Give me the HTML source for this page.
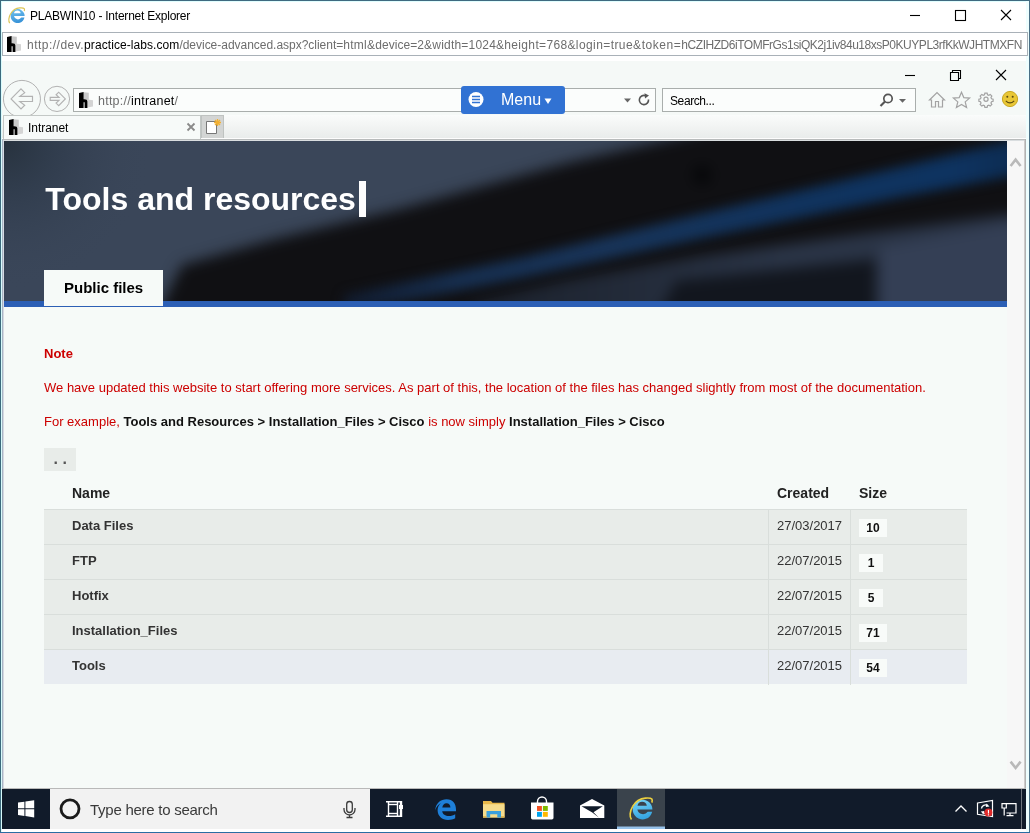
<!DOCTYPE html>
<html lang="en">
<head>
<meta charset="utf-8">
<title>PLABWIN10 - Internet Explorer</title>
<style>
*{box-sizing:border-box;margin:0;padding:0}
html,body{width:1030px;height:833px;overflow:hidden;background:#fff}
body{position:relative;will-change:transform;font-family:"Liberation Sans",sans-serif;color:#000}
.abs{position:absolute}
.t{position:absolute;white-space:nowrap;line-height:1}
#win{left:0;top:0;width:1030px;height:833px;background:#fff}
/* outer url bar */
#url{left:2px;top:32px;width:1026px;height:24px;border:1px solid #a9b1b8;background:#fff}
/* inner ie */
#ie{left:2px;top:61px;width:1024px;height:727px;background:#f5f9f7}
#addr{left:73px;top:88px;width:583px;height:24px;border:1px solid #a9aeac;background:#fbfdfc}
#search{left:662px;top:88px;width:254px;height:24px;border:1px solid #a9aeac;background:#fbfdfc}
#menu{left:461px;top:86px;width:104px;height:27.5px;background:#3172d3;border-radius:3px}
#tabrow{left:2px;top:115px;width:1024px;height:24px;background:linear-gradient(#fafcfb 0,#f3f5f4 10px,#e9eceb 23px,#fdfdfd 23px)}
#tab{left:3px;top:115px;width:198px;height:24px;background:#f7faf9;border:1px solid #c3c8c6;border-bottom:none}
#newtab{left:201px;top:115px;width:23px;height:23px;background:#d3d5d4;border:1px solid #bfc3c1;border-bottom:none}
/* page */
#page{left:4px;top:140px;width:1003px;height:648px;background:#f6faf8;overflow:hidden;border-top:0 solid #d5dadd}
#banner{left:0;top:1px;width:1003px;height:160px;background:#2f3a4d;overflow:hidden}
#blue{left:0;top:161px;width:1003px;height:5.5px;background:#2c5fb5}
#ptab{left:40px;top:130px;width:119px;height:36px;background:#f6faf8}
#sb{left:1007px;top:141px;width:17px;height:647px;background:#f7f7f7}
.red{color:#cc0000}
.b{font-weight:bold}
.row{position:absolute;left:40px;width:923px;height:35px;background:#e8ece9;border-top:1px solid #d9dedb}
.row .c1{position:absolute;left:724px;top:0;width:1px;height:35px;background:#d9dedb}
.row .c2{position:absolute;left:806px;top:0;width:1px;height:35px;background:#d9dedb}
.row .n{position:absolute;left:28px;top:8px;font-size:13px;font-weight:bold;color:#333;line-height:16px;white-space:nowrap}
.row .d{position:absolute;left:733px;top:8px;font-size:13px;color:#333;line-height:16px;white-space:nowrap}
.row .s{position:absolute;left:815px;top:9px;height:18px;width:28px;background:#f8fbf9;font-size:12px;font-weight:bold;color:#111;line-height:18px;text-align:center}
.row .s1{width:24px}
/* taskbar */
#task{left:2px;top:789px;width:1024px;height:40px;background:#111b2a}
#tsearch{left:50px;top:789px;width:320px;height:40px;background:#f2f2f2}
</style>
</head>
<body>
<div id="win" class="abs"></div>
<div class="abs" style="left:0;top:0;width:1030px;height:1px;background:#3f6a80"></div>
<div class="abs" style="left:0;top:1px;width:1030px;height:1px;background:#e0fefe"></div>
<div class="abs" style="left:0;top:0;width:1px;height:833px;background:#3b6a7d"></div>
<div class="abs" style="left:1px;top:1px;width:1px;height:831px;background:#d8fbfc"></div>
<div class="abs" style="left:1029px;top:0;width:1px;height:833px;background:#4a6f85"></div>
<div class="abs" style="left:1026px;top:1px;width:3px;height:831px;background:#eefefe"></div>
<div class="abs" style="left:0;top:832px;width:1030px;height:1px;background:#2a6da3"></div>

<!-- outer title bar -->
<div class="t" style="left:30px;top:10px;font-size:12px;letter-spacing:-0.23px;color:#000">PLABWIN10 - Internet Explorer</div>
<div id="url" class="abs"></div>
<div class="t" style="left:27px;top:39px;font-size:12px;color:#6d6d6d"><span style="letter-spacing:0.48px">http://dev.</span><span style="letter-spacing:0.075px;color:#000">practice-labs.com</span><span style="letter-spacing:-0.022px">/device-advanced.aspx?client=</span><span style="letter-spacing:0.3px">html</span><span style="letter-spacing:0.07px">&amp;device=2</span><span style="letter-spacing:0.2px">&amp;width=1024</span><span style="letter-spacing:0.33px">&amp;height=768</span><span style="letter-spacing:0.42px">&amp;login=true</span><span style="letter-spacing:0.56px">&amp;token=</span><span style="letter-spacing:-0.466px">hCZIHZD6iTOMFrGs1siQK2j1iv84u18xsP0KUYPL3rfKkWJHTMXFN</span></div>

<!-- inner IE -->
<div id="ie" class="abs"></div>
<div id="addr" class="abs"></div>
<div class="t" style="left:98px;top:94.5px;font-size:12.5px;letter-spacing:0.24px;color:#6d6d6d">http://<span style="color:#000">intranet</span>/</div>
<div id="search" class="abs"></div>
<div class="t" style="left:670px;top:94.5px;font-size:12px;letter-spacing:-0.4px;color:#000">Search...</div>
<div id="menu" class="abs"></div>
<div class="t" style="left:501px;top:91.7px;font-size:16px;color:#fff">Menu</div>
<div id="tabrow" class="abs"></div>
<div id="tab" class="abs"></div>
<div id="newtab" class="abs"></div>
<div class="t" style="left:28px;top:122px;font-size:12px;letter-spacing:-0.04px;color:#000">Intranet</div>

<svg class="abs" style="left:8.2px;top:5.2px" width="18.7" height="18.7" viewBox="0 0 32 32"><defs><linearGradient id="ieg1" x1="0" y1="0" x2="0.3" y2="1"><stop offset="0" stop-color="#72c2f0"/><stop offset="1" stop-color="#3a94d8"/></linearGradient></defs><path d="M28.5,19 H10.2 a7,7 0 0 0 12.6,2.6 h5.4 a12,12 0 1 1 0.3,-2.6 Z M10.3,14.2 h11.4 a5.8,5.8 0 0 0 -11.4,0 Z" fill="url(#ieg1)" fill-rule="evenodd"/><path d="M3,31 C0.5,28 0.8,21 4.5,15 C8,9 14,5.5 20,5 C24,4.7 26.8,5 27.8,6.2 C28.5,7.2 28.3,9 27.8,10.5" fill="none" stroke="#dcc555" stroke-width="2"/></svg>
<svg class="abs" style="left:7px;top:36px" width="14" height="16" viewBox="0 0 14 16"><polygon points="4.5,0.2 9.8,0.8 9.8,8 4.5,8" fill="#c9c9c9"/><polygon points="8.3,7.6 14,8.2 14,14.6 8.3,15.4" fill="#d4d4d4"/><path d="M0,0.9 L4.6,0 L4.6,7.2 Q8.4,7 8.4,9.5 L8.4,16 L5.6,16 L5.6,10.2 L4.6,10.2 L4.6,16 L0,16 Z" fill="#000"/></svg>
<svg class="abs" style="left:79px;top:92px" width="14" height="16" viewBox="0 0 14 16"><polygon points="4.5,0.2 9.8,0.8 9.8,8 4.5,8" fill="#c9c9c9"/><polygon points="8.3,7.6 14,8.2 14,14.6 8.3,15.4" fill="#d4d4d4"/><path d="M0,0.9 L4.6,0 L4.6,7.2 Q8.4,7 8.4,9.5 L8.4,16 L5.6,16 L5.6,10.2 L4.6,10.2 L4.6,16 L0,16 Z" fill="#000"/></svg>
<svg class="abs" style="left:9px;top:119px" width="14" height="16" viewBox="0 0 14 16"><polygon points="4.5,0.2 9.8,0.8 9.8,8 4.5,8" fill="#c9c9c9"/><polygon points="8.3,7.6 14,8.2 14,14.6 8.3,15.4" fill="#d4d4d4"/><path d="M0,0.9 L4.6,0 L4.6,7.2 Q8.4,7 8.4,9.5 L8.4,16 L5.6,16 L5.6,10.2 L4.6,10.2 L4.6,16 L0,16 Z" fill="#000"/></svg>
<svg class="abs" style="left:900px;top:1px" width="128" height="30" viewBox="0 0 128 30" fill="none" stroke="#000" stroke-width="1.1"><path d="M10,14.5 H20"/><rect x="55.5" y="9.5" width="10" height="10"/><path d="M101,9 L111,19 M111,9 L101,19"/></svg>
<svg class="abs" style="left:895px;top:62px" width="128" height="26" viewBox="0 0 128 26" fill="none" stroke="#000" stroke-width="1.1"><path d="M10,13.5 H20"/><path d="M55.5,10.5 h8 v8 h-8 Z M57.5,10.5 v-2 h8 v8 h-2"/><path d="M101,8 L111,18 M111,8 L101,18"/></svg>
<svg class="abs" style="left:2px;top:79px" width="70" height="36" viewBox="0 0 70 36" fill="none" stroke="#b2b2b2" stroke-width="1"><circle cx="19.95" cy="19.9" r="18.5"/><path d="M9.1,19.9 L19,9.9 L22.7,13.6 L17.8,17.3 H30.5 V22.5 H17.8 L22.7,26.2 L19,29.9 Z" stroke-width="1.15"/><circle cx="55" cy="19.9" r="12.6"/><path d="M63.3,19.9 L56.7,13.2 L54.1,15.8 L57,18.4 H48.2 V21.4 H57 L54.1,24.1 L56.7,26.7 Z" stroke-width="1.15"/></svg>
<svg class="abs" style="left:620px;top:90px" width="34" height="20" viewBox="0 0 34 20"><polygon points="4,8.5 11,8.5 7.5,12.5" fill="#666"/><path d="M28.5,9.5 a4.6,4.6 0 1 1 -3,-3.8" fill="none" stroke="#555" stroke-width="1.6"/><polygon points="24.5,3.2 29,5.5 25,8.6" fill="#555"/></svg>
<svg class="abs" style="left:876px;top:90px" width="36" height="20" viewBox="0 0 36 20"><circle cx="12" cy="8.5" r="4.2" fill="none" stroke="#555" stroke-width="1.7"/><path d="M9,11.5 L4.5,16" stroke="#555" stroke-width="2.2"/><polygon points="23,9 30,9 26.5,12.8" fill="#666"/></svg>
<svg class="abs" style="left:927px;top:89px" width="96" height="22" viewBox="0 0 96 22" fill="none" stroke="#a3a3a3" stroke-width="1.2"><path d="M2.5,11 L10,3.5 L17.5,11 H15.5 V18 H11.5 V12.5 H8.5 V18 H4.5 V11 Z"/><path d="M34.5,3.2 L36.8,8.6 L42.6,9.1 L38.2,12.9 L39.6,18.5 L34.5,15.5 L29.4,18.5 L30.8,12.9 L26.4,9.1 L32.2,8.6 Z"/><g transform="translate(59,10.2) scale(0.8)" stroke-width="1.5"><circle r="2.6"/><path d="M-1.4,-7.6 h2.8 l0.5,2 l1.6,0.7 l1.8,-1.1 l2,2 l-1.1,1.8 l0.7,1.6 l2,0.5 v2.8 l-2,0.5 l-0.7,1.6 l1.1,1.8 l-2,2 l-1.8,-1.1 l-1.6,0.7 l-0.5,2 h-2.8 l-0.5,-2 l-1.6,-0.7 l-1.8,1.1 l-2,-2 l1.1,-1.8 l-0.7,-1.6 l-2,-0.5 v-2.8 l2,-0.5 l0.7,-1.6 l-1.1,-1.8 l2,-2 l1.8,1.1 l1.6,-0.7 Z"/></g><circle cx="83" cy="10" r="7.6" fill="#e9c736" stroke="#c9a822" stroke-width="1"/><circle cx="80.3" cy="7.8" r="1" fill="#5a4a10" stroke="none"/><circle cx="85.7" cy="7.8" r="1" fill="#5a4a10" stroke="none"/><path d="M78.8,11.8 Q83,16 87.2,11.8" stroke="#5a4a10" stroke-width="1.1"/></svg>
<svg class="abs" style="left:468px;top:91px" width="90" height="18" viewBox="0 0 90 18"><circle cx="8" cy="8.5" r="7.5" fill="#fff"/><path d="M4,5.5 H12 M4,8.5 H12 M4,11.5 H12" stroke="#3172d3" stroke-width="1.6"/><polygon points="76.5,7.5 83.5,7.5 80,13" fill="#fff"/></svg>
<svg class="abs" style="left:185px;top:121px" width="12" height="12" viewBox="0 0 12 12"><path d="M2.5,2.5 L9.5,9.5 M9.5,2.5 L2.5,9.5" stroke="#8a8a8a" stroke-width="1.8"/></svg>
<svg class="abs" style="left:204px;top:116px" width="20" height="20" viewBox="0 0 20 20"><path d="M2.5,5.5 H12.5 V17.5 H2.5 Z" fill="#fff" stroke="#777" stroke-width="1"/><path d="M13.5,3 V10 M10,6.5 H17 M11,4 L16,9 M16,4 L11,9" stroke="#f3b030" stroke-width="1.3"/></svg>

<!-- page -->
<div id="page" class="abs">
  <div id="banner" class="abs"><svg class="abs" style="left:0;top:0" width="1003" height="160" viewBox="0 0 1003 160">
    <defs>
      <linearGradient id="stripe" gradientUnits="userSpaceOnUse" x1="340" x2="1003" y1="0" y2="0"><stop offset="0" stop-color="#111b2d"/><stop offset="0.17" stop-color="#172f50"/><stop offset="0.4" stop-color="#183459"/><stop offset="0.7" stop-color="#10335e"/><stop offset="0.92" stop-color="#0e3360"/><stop offset="1" stop-color="#0d2d54"/></linearGradient>
      <linearGradient id="band" gradientUnits="userSpaceOnUse" x1="470" x2="780" y1="0" y2="0"><stop offset="0" stop-color="#1b212c"/><stop offset="1" stop-color="#2a3446"/></linearGradient>
      <radialGradient id="corner" gradientUnits="userSpaceOnUse" cx="0" cy="0" r="150"><stop offset="0" stop-color="#27323e"/><stop offset="0.35" stop-color="#2f3b4b" stop-opacity="0.8"/><stop offset="1" stop-color="#3a4659" stop-opacity="0"/></radialGradient>
    </defs>
    <rect x="-20" y="-20" width="1043" height="200" fill="#3a4659"/>
    <rect x="0" y="0" width="200" height="160" fill="url(#corner)"/>
    <g style="filter:blur(7px)">
      <polygon points="100,210 150,190 160,160 178,124 271,98 396,68 563,22 700,-10 760,-40 1060,-40 1060,210" fill="#101013"/>
      <polygon points="440,210 470,162 560,140 700,115 870,91 1060,66 1060,210" fill="url(#band)"/>
      <polygon points="640,200 672,140 872,118 872,200" fill="#12161e"/>
      <polygon points="876,106 1060,72 1060,200 876,200" fill="#343f55"/>
      <circle cx="698" cy="34" r="9" fill="#050608"/>
    </g>
    <g style="filter:blur(6px)">
      <polygon points="340,154 516,117 696,73 896,26 1040,-8 1040,29 896,56 696,97.5 516,137 340,172" fill="url(#stripe)"/>
    </g>
  </svg></div>
  <div id="blue" class="abs"></div>
  <div id="ptab" class="abs"></div>
  <div class="t b" style="left:41.3px;top:43px;font-size:32px;color:#fff">Tools and resources</div>
  <div class="abs" style="left:355px;top:41px;width:7px;height:36px;background:#fdfdfd"></div>
  <div class="t b" style="left:60px;top:140px;font-size:15px;color:#000">Public files</div>

  <div class="t b red" style="left:40px;top:207px;font-size:13px">Note</div>
  <div class="t red" style="left:40px;top:241px;font-size:13px">We have updated this website to start offering more services. As part of this, the location of the files has changed slightly from most of the documentation.</div>
  <div class="t red" style="left:40px;top:275px;font-size:13px">For example, <span class="b" style="color:#111">Tools and Resources &gt; Installation_Files &gt; Cisco</span> is now simply <span class="b" style="color:#111">Installation_Files &gt; Cisco</span></div>

  <div class="abs" style="left:40px;top:308px;width:32px;height:23px;background:#e8ece9"></div>
  <div class="t b" style="left:49.5px;top:311px;font-size:16px;color:#555;letter-spacing:4.55px">..</div>

  <div class="t b" style="left:68px;top:346px;font-size:14px;color:#222">Name</div>
  <div class="t b" style="left:773px;top:346px;font-size:14px;color:#222">Created</div>
  <div class="t b" style="left:855px;top:346px;font-size:14px;color:#222">Size</div>

  <div class="row" style="top:369px"><i class="c1"></i><i class="c2"></i><span class="n">Data Files</span><span class="d">27/03/2017</span><span class="s">10</span></div>
  <div class="row" style="top:404px"><i class="c1"></i><i class="c2"></i><span class="n">FTP</span><span class="d">22/07/2015</span><span class="s s1">1</span></div>
  <div class="row" style="top:439px"><i class="c1"></i><i class="c2"></i><span class="n">Hotfix</span><span class="d">22/07/2015</span><span class="s s1">5</span></div>
  <div class="row" style="top:474px"><i class="c1"></i><i class="c2"></i><span class="n">Installation_Files</span><span class="d">22/07/2015</span><span class="s">71</span></div>
  <div class="row" style="top:509px;background:#e8ecf1"><i class="c1"></i><i class="c2"></i><span class="n">Tools</span><span class="d">22/07/2015</span><span class="s">54</span></div>
</div>
<div id="sb" class="abs"></div>
<div class="abs" style="left:2px;top:139px;width:1024px;height:1px;background:#b8bbbb"></div>
<div class="abs" style="left:3px;top:140px;width:1022px;height:1px;background:#d9dddf"></div>
<div class="abs" style="left:2px;top:139px;width:1px;height:650px;background:#a8b4c4"></div>
<div class="abs" style="left:3px;top:141px;width:1px;height:647px;background:#d6dae3"></div>
<div class="abs" style="left:1024px;top:140px;width:1px;height:648px;background:#cdcbca"></div>
<div class="abs" style="left:1025px;top:139px;width:1px;height:650px;background:#b2b2b2"></div>
<div class="abs" style="left:2px;top:788px;width:1024px;height:1px;background:#b9b9b9"></div>

<svg class="abs" style="left:1008px;top:155px" width="16" height="14" viewBox="0 0 16 14"><path d="M2.6,11 L7.6,4.6 L12.6,11" fill="none" stroke="#b9b9b9" stroke-width="2.6"/></svg>
<svg class="abs" style="left:1008px;top:758px" width="16" height="14" viewBox="0 0 16 14"><path d="M2.6,3.6 L7.6,10 L12.6,3.6" fill="none" stroke="#b9b9b9" stroke-width="2.6"/></svg>
<!-- taskbar -->
<div id="task" class="abs"></div>
<div id="tsearch" class="abs"></div>
<svg class="abs" style="left:2px;top:789px" width="1026" height="40" viewBox="0 0 1026 40">
  <!-- start -->
  <path d="M16,13.6 L22.4,12.7 V19.3 H16 Z M23.4,12.5 L32.2,11.2 V19.3 H23.4 Z M16,20.3 H22.4 V26.9 L16,26 Z M23.4,20.3 H32.2 V28.4 L23.4,27.1 Z" fill="#fff"/>
  <!-- cortana circle -->
  <circle cx="68" cy="19.8" r="9" fill="none" stroke="#1a1a1a" stroke-width="2.8"/>
  <!-- mic -->
  <g fill="none" stroke="#3b3b3b" stroke-width="1.3"><rect x="344.7" y="12.5" width="5.6" height="11" rx="2.8"/><path d="M342,19 v1.5 a5.5,5.5 0 0 0 11,0 V19 M347.5,26 V28.5 M344.5,28.5 H350.5"/></g>
  <!-- task view -->
  <g fill="none" stroke="#fff" stroke-width="1.4"><rect x="386.5" y="15.5" width="9" height="9"/><path d="M384,12.7 H398 M384,27.3 H398 M386.5,12.7 V15 M395.5,12.7 V15 M386.5,25 V27.3 M395.5,25 V27.3"/></g>
  <rect x="397.8" y="12" width="2.4" height="16" fill="#fff"/><rect x="397" y="16" width="4" height="4" fill="#fff"/>
  <!-- edge -->
  <path d="M433.2,21.5 C433.5,14 439,10.2 444.5,10.2 C451,10.2 454,15 454,20.5 V22.3 H440.2 C440.5,25.5 443.5,27 446.8,27 C449.5,27 451.6,26.2 453.2,25.2 V29.3 C451.3,30.3 449,30.9 446,30.9 C440,30.9 435.6,27 435.6,21.2 C435.6,18 437,15.5 439.2,14 C436.2,15.2 434,18 433.2,21.5 Z M440.3,18.6 H448.4 C448.4,16 447,14.3 444.5,14.3 C442.2,14.3 440.7,16.2 440.3,18.6 Z" fill="#1e7fd8" fill-rule="evenodd"/>
  <!-- explorer -->
  <path d="M481,12 H489 L490.5,13.8 H502.5 V28.5 H481 Z" fill="#e8b84a"/>
  <rect x="481" y="15.2" width="21.5" height="13.3" fill="#f6dc8c"/>
  <path d="M484.5,28.5 V22 H499 V28.5 H495.3 V25.3 H488.2 V28.5 Z" fill="#3ba0dc"/>
  <rect x="481" y="27.3" width="3.5" height="1.2" fill="#d9a93d"/><rect x="499" y="27.3" width="3.5" height="1.2" fill="#d9a93d"/>
  <!-- store -->
  <path d="M535.5,14 V12.5 a4.5,4.5 0 0 1 9,0 V14" fill="none" stroke="#fff" stroke-width="1.4"/>
  <path d="M529,13.6 H551.5 V28.8 a1.6,1.6 0 0 1 -1.6,1.6 H530.6 a1.6,1.6 0 0 1 -1.6,-1.6 Z" fill="#fff"/>
  <rect x="535" y="17" width="4.9" height="4.9" fill="#f25022"/><rect x="540.9" y="17" width="4.9" height="4.9" fill="#7fba00"/><rect x="535" y="22.9" width="4.9" height="4.9" fill="#00a4ef"/><rect x="540.9" y="22.9" width="4.9" height="4.9" fill="#ffb900"/>
  <!-- mail -->
  <path d="M578,16.5 L590,10 L602.3,16.5 V29 H578 Z" fill="#fff"/>
  <path d="M579.5,17.3 H600.8 L591.5,23.3 L597,28.8 L590.3,23.6 Z" fill="#111b2a"/>
  <!-- IE active -->
  <rect x="615" y="0" width="48" height="40" fill="#3a434c"/>
  <rect x="615" y="37.5" width="48" height="2.5" fill="#96c2ea"/>
  <!-- chevron -->
  <path d="M953.5,22.5 L959,17 L964.5,22.5" fill="none" stroke="#fff" stroke-width="1.3"/>
  <!-- update icon -->
  <path d="M975.5,14 L990.5,11.5 V27.5 L975.5,25.3 Z" fill="none" stroke="#fff" stroke-width="1.2"/>
  <path d="M979.5,19.5 a4,4 0 0 1 6,-3 M986.5,21.5 a4,4 0 0 1 -6,2" fill="none" stroke="#fff" stroke-width="1.4"/>
  <polygon points="984.5,14.5 987.5,17.5 983.8,18" fill="#fff"/><polygon points="981.5,25.5 978.8,22.4 982.4,22" fill="#fff"/>
  <circle cx="986.4" cy="23.6" r="4" fill="#e02b2b"/>
  <rect x="985.9" y="20.9" width="1.1" height="3.6" fill="#fff"/><rect x="985.9" y="25.3" width="1.1" height="1.1" fill="#fff"/>
  <!-- network -->
  <g fill="none" stroke="#fff" stroke-width="1.2"><path d="M1004,14.6 H1014 V24 H1004.5"/><path d="M1000,14.6 H1004.3 V19 H1000 Z"/><path d="M1002.2,19 V26.6 M1004.5,26.6 H1011.5 M1008,24 V26.6"/></g>
  <!-- show desktop sep -->
  <rect x="1019" y="0" width="1" height="40" fill="#6f757d"/>
</svg>
<svg class="abs" style="left:628.8px;top:794.3px" width="26.3" height="26.3" viewBox="0 0 32 32"><defs><linearGradient id="ieg2" x1="0" y1="0" x2="0.3" y2="1"><stop offset="0" stop-color="#7ad6f6"/><stop offset="1" stop-color="#37a6e2"/></linearGradient></defs><path d="M28.5,19 H10.2 a7,7 0 0 0 12.6,2.6 h5.4 a12,12 0 1 1 0.3,-2.6 Z M10.3,14.2 h11.4 a5.8,5.8 0 0 0 -11.4,0 Z" fill="url(#ieg2)" fill-rule="evenodd"/><path d="M3,31 C0.5,28 0.8,21 4.5,15 C8,9 14,5.5 20,5 C24,4.7 26.8,5 27.8,6.2 C28.5,7.2 28.3,9 27.8,10.5" fill="none" stroke="#ecd040" stroke-width="2"/></svg>
<div class="t" style="left:90px;top:802px;font-size:15px;letter-spacing:-0.26px;color:#3a3a3a">Type here to search</div>
</body>
</html>
